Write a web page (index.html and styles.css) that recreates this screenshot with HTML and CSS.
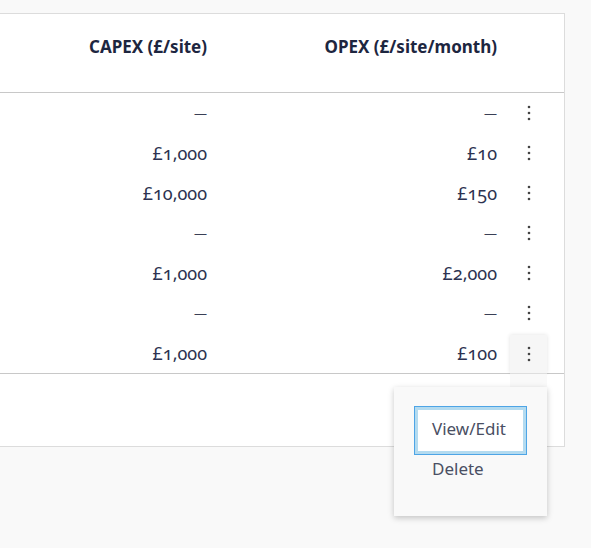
FILE: index.html
```html
<!DOCTYPE html>
<html lang="en">
<head>
<meta charset="utf-8">
<title>Costs</title>
<link rel="stylesheet" href="styles.css">
</head>
<body>
<div class="card">
  <table class="costs">
    <thead>
      <tr>
        <th class="c-capex">CAPEX (£/site)</th>
        <th class="c-opex">OPEX (£/site/month)</th>
        <th class="c-act"></th>
      </tr>
    </thead>
    <tbody>
      <tr><td class="c-capex"><span class="dash">—</span></td><td class="c-opex"><span class="dash">—</span></td><td class="c-act"><button class="kebab"><svg width="4" height="16" viewBox="0 0 4 16"><circle cx="2" cy="2" r="1.3"/><circle cx="2" cy="8" r="1.3"/><circle cx="2" cy="14" r="1.3"/></svg></button></td></tr>
      <tr><td class="c-capex">£1,000</td><td class="c-opex">£10</td><td class="c-act"><button class="kebab"><svg width="4" height="16" viewBox="0 0 4 16"><circle cx="2" cy="2" r="1.3"/><circle cx="2" cy="8" r="1.3"/><circle cx="2" cy="14" r="1.3"/></svg></button></td></tr>
      <tr><td class="c-capex">£10,000</td><td class="c-opex">£150</td><td class="c-act"><button class="kebab"><svg width="4" height="16" viewBox="0 0 4 16"><circle cx="2" cy="2" r="1.3"/><circle cx="2" cy="8" r="1.3"/><circle cx="2" cy="14" r="1.3"/></svg></button></td></tr>
      <tr><td class="c-capex"><span class="dash">—</span></td><td class="c-opex"><span class="dash">—</span></td><td class="c-act"><button class="kebab"><svg width="4" height="16" viewBox="0 0 4 16"><circle cx="2" cy="2" r="1.3"/><circle cx="2" cy="8" r="1.3"/><circle cx="2" cy="14" r="1.3"/></svg></button></td></tr>
      <tr><td class="c-capex">£1,000</td><td class="c-opex">£2,000</td><td class="c-act"><button class="kebab"><svg width="4" height="16" viewBox="0 0 4 16"><circle cx="2" cy="2" r="1.3"/><circle cx="2" cy="8" r="1.3"/><circle cx="2" cy="14" r="1.3"/></svg></button></td></tr>
      <tr><td class="c-capex"><span class="dash">—</span></td><td class="c-opex"><span class="dash">—</span></td><td class="c-act"><button class="kebab"><svg width="4" height="16" viewBox="0 0 4 16"><circle cx="2" cy="2" r="1.3"/><circle cx="2" cy="8" r="1.3"/><circle cx="2" cy="14" r="1.3"/></svg></button></td></tr>
      <tr class="last"><td class="c-capex">£1,000</td><td class="c-opex">£100</td><td class="c-act"><button class="kebab open"><svg width="4" height="16" viewBox="0 0 4 16"><circle cx="2" cy="2" r="1.3"/><circle cx="2" cy="8" r="1.3"/><circle cx="2" cy="14" r="1.3"/></svg><span class="connector"></span></button></td></tr>
    </tbody>
  </table>
</div>
<div class="menu">
  <div class="menu-item focused">View/Edit</div>
  <div class="menu-item">Delete</div>
</div>
</body>
</html>
```
FILE: styles.css
```css
html, body {
  margin: 0;
  padding: 0;
  background: #f9f9f9;
  font-family: "Noto Sans", "Open Sans", sans-serif;
}
body {
  position: relative;
  width: 591px;
  height: 548px;
  overflow: hidden;
}
.card {
  margin: 13px 0 0 -20px;
  width: 585px;
  box-sizing: border-box;
  height: 434px;
  background: #fff;
  border: 1px solid #dcdcdc;
  padding: 0 13px 0 0;
}
.costs {
  border-collapse: collapse;
  table-layout: fixed;
  width: 570px;
}
.costs th {
  font-weight: 700;
  font-size: 17px;
  color: #1d2640;
  line-height: 20px;
  padding: 23px 0 35px 0;
  text-align: right;
  border-bottom: 1px solid #c8c8c8;
}
.costs td {
  font-size: 18px;
  color: #2c3250;
  height: 40px;
  padding: 0;
  text-align: right;
  line-height: 20px;
  font-variant-numeric: oldstyle-nums;
  vertical-align: middle;
}
.dash {
  font-size: 13px;
  color: #3a3f55;
  vertical-align: 2px;
}
.costs tr.last td {
  border-bottom: 1px solid #c8c8c8;
}
.c-capex { width: 226px; }
.c-opex { width: 290px; }
.costs .c-act {
  width: 54px;
  text-align: left;
  padding-left: 13px;
}
.kebab {
  display: flex;
  align-items: center;
  justify-content: center;
  width: 37px;
  height: 38px;
  margin: 0;
  padding: 0;
  border: 0;
  background: transparent;
  fill: #444;
  position: relative;
}
.kebab.open {
  background: #f6f6f6;
  box-shadow: 0 0 4px rgba(0,0,0,0.12);
  margin-top: 1px;
}
.connector {
  position: absolute;
  left: 0;
  top: 38px;
  width: 37px;
  height: 15px;
  background: #f9f9f9;
  border-top: 1px solid #dedede;
}
.menu {
  position: absolute;
  left: 394px;
  top: 387px;
  width: 153px;
  height: 129px;
  box-sizing: border-box;
  background: #f9f9f9;
  box-shadow: 0 2px 6px rgba(0,0,0,0.22);
  padding: 19px 20px 0 20px;
}
.menu-item {
  font-size: 17px;
  color: #4a4f63;
  line-height: 20px;
  padding: 0 0 0 18px;
  height: 28px;
  display: flex;
  align-items: center;
  box-sizing: border-box;
  margin-top: 0;
}
.menu-item.focused {
  width: 113px;
  height: 49px;
  margin-top: 0;
  background: #fff;
  border: 1px solid #4ea5e6;
  box-shadow: 0 0 0 3px #b4dbf0 inset;
  outline: 3px solid #b4dbf0;
  outline-offset: -4px;
  padding: 0 0 4px 17px;
}
```
